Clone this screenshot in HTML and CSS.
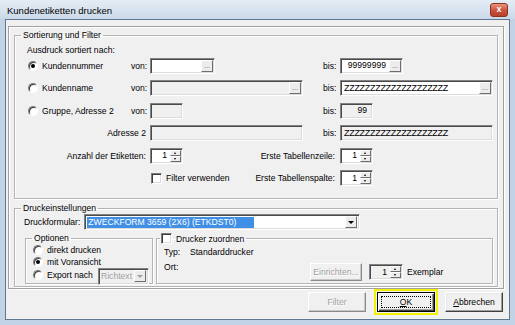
FILE: index.html
```html
<!DOCTYPE html>
<html lang="de">
<head>
  <meta charset="UTF-8" />
  <title>Kundenetiketten drucken</title>
  <link rel="stylesheet" href="styles.css">
</head>
<body>
  <div class="window">
    <div class="titlebar">
      <span class="title">Kundenetiketten drucken</span>
      <span class="close">x</span>
    </div>

    <div class="client">
      <div class="panel">

        <fieldset class="group sort">
          <legend>Sortierung und Filter</legend>
          <div class="caption">Ausdruck sortiert nach:</div>
          <div class="sort-grid">
            <!-- Kundennummer -->
            <span class="opt"><span class="radio on"></span>Kundennummer</span>
            <span class="lbl">von:</span>
            <span class="field w65"><span class="val"></span><span class="dots">...</span></span>
            <span class="lbl bis">bis:</span>
            <span class="field w63"><span class="val right">99999999</span><span class="dots">...</span></span>

            <!-- Kundenname -->
            <span class="opt"><span class="radio"></span>Kundenname</span>
            <span class="lbl">von:</span>
            <span class="field off"><span class="val"></span><span class="dots">...</span></span>
            <span class="lbl bis">bis:</span>
            <span class="field"><span class="val zz">ZZZZZZZZZZZZZZZZZZZZ</span><span class="dots">...</span></span>

            <!-- Gruppe -->
            <span class="opt"><span class="radio"></span>Gruppe, Adresse 2</span>
            <span class="lbl">von:</span>
            <span class="field off w33"><span class="val"></span></span>
            <span class="lbl bis">bis:</span>
            <span class="field off w33"><span class="val right">99</span></span>

            <!-- Adresse 2 -->
            <span class="rlbl wide">Adresse 2</span>
            <span class="field off"><span class="val"></span></span>
            <span class="lbl bis">bis:</span>
            <span class="field off"><span class="val zz">ZZZZZZZZZZZZZZZZZZZZ</span></span>

            <!-- Anzahl / Tabellenzeile -->
            <span class="rlbl wide r5">Anzahl der Etiketten:</span>
            <span class="field w33 c3 r5"><span class="val right">1</span><span class="spin"><i class="up"></i><i class="dn"></i></span></span>
            <span class="rlbl right-side r5">Erste Tabellenzeile:</span>
            <span class="field w33 c6 r5"><span class="val right">1</span><span class="spin"><i class="up"></i><i class="dn"></i></span></span>

            <!-- Filter / Tabellenspalte -->
            <span class="check-line c3 r6"><span class="check"></span>Filter verwenden</span>
            <span class="rlbl right-side r6">Erste Tabellenspalte:</span>
            <span class="field w33 c6 r6"><span class="val right">1</span><span class="spin"><i class="up"></i><i class="dn"></i></span></span>
          </div>
        </fieldset>

        <fieldset class="group druck">
          <legend>Druckeinstellungen</legend>
          <div class="form-row">
            <span>Druckformular:</span>
            <span class="select">
              <span class="val"><span class="sel">ZWECKFORM 3659 (2X6) (ETKDST0)</span></span>
              <span class="arrow"></span>
            </span>
          </div>
          <div class="sub-groups">
            <fieldset class="group small optionen">
              <legend>Optionen</legend>
              <div class="opt-row"><span class="radio"></span>direkt drucken</div>
              <div class="opt-row"><span class="radio on"></span>mit Voransicht</div>
              <div class="opt-row"><span class="radio"></span>Export nach
                <span class="select off richtext"><span class="val">Richtext</span><span class="arrow"></span></span>
              </div>
            </fieldset>
            <fieldset class="group small drucker">
              <legend><span class="check"></span>Drucker zuordnen</legend>
              <div class="info-row"><span class="key">Typ:</span>Standarddrucker</div>
              <div class="info-row ort">
                <span class="key">Ort:</span>
                <span class="btn off einrichten">Einrichten...</span>
                <span class="field off w34"><span class="val right">1</span><span class="spin"><i class="up"></i><i class="dn"></i></span></span>
                <span class="exemplar">Exemplar</span>
              </div>
            </fieldset>
          </div>
        </fieldset>

      </div>

      <div class="buttons">
        <span class="btn off">Filter</span>
        <span class="focus-mark"><span class="btn default"><span class="focus"><u>O</u>K</span></span></span>
        <span class="btn"><u>A</u>bbrechen</span>
      </div>
    </div>
  </div>
</body>
</html>
```

FILE: styles.css
```css
* {
  box-sizing: border-box;
}
body {
  margin: 0;
  font-family: "Liberation Sans", Arial, sans-serif;
  font-size: 8.6px;
  color: #000;
}
.window {
  width: 515px;
  height: 325px;
  background: #c2d3e6;
  padding: 0 5px 5px;
  display: flex;
  flex-direction: column;
}
.titlebar {
  height: 19px;
  flex: none;
  margin: 0 -5px;
  padding: 0 7px;
  display: flex;
  align-items: center;
  background: linear-gradient(#e4ecf5, #d6e2ef 60%, #cad8e8);
}
.title {
  font-size: 9.5px;
  padding-top: 1px;
}
.close {
  margin-left: auto;
  width: 18px;
  height: 14px;
  border: 1px solid #8a3422;
  border-radius: 3px;
  background: linear-gradient(#e9957c, #c9503a 55%, #b9402b);
  color: #fff;
  font-weight: bold;
  font-size: 9px;
  line-height: 11px;
  text-align: center;
}

.client {
  flex: 1;
  min-height: 0;
  border: 1px solid #5f7790;
  background: #f0f0f0;
  display: flex;
  flex-direction: column;
  padding: 6px 5px 0 2px;
}
.panel {
  height: 263px;
  flex: none;
  border: 1px solid #a0a0a0;
  box-shadow: inset 1px 1px 0 #fff, 1px 1px 0 #fff;
  padding: 0 5px;
}

/* group boxes */
.group {
  margin: 0;
  border: 1px solid #b4b4b4;
  box-shadow: inset 1px 1px 0 #fff, 1px 1px 0 #fff;
  min-width: 0;
}
.group legend {
  line-height: 11px;
  padding: 0 2px;
}
.sort {
  margin-top: 3px;
  padding: 4px 3px 12px 13px;
}
.sort legend {
  margin-left: -7px;
}
.caption {
  line-height: 11px;
  margin-left: -1px;
}
.sort-grid {
  margin-top: 1.5px;
  display: grid;
  grid-template-columns: 102px 20px 153px 19px 18px 153px;
  grid-auto-rows: 16px;
  row-gap: 6.6px;
  align-items: center;
}
.opt {
  display: flex;
  align-items: center;
  gap: 4px;
}
.lbl {
  padding-left: 1px;
}
.lbl.bis {
  grid-column: 5;
}
.rlbl {
  text-align: right;
  padding-right: 4px;
  white-space: nowrap;
}
.rlbl.wide {
  grid-column: 1 / 3;
}
.rlbl.right-side {
  grid-column: 3 / 6;
  padding-right: 5px;
}
.c3 { grid-column: 3; }
.c6 { grid-column: 6; }
.r5 { grid-row: 5; }
.r6 { grid-row: 6; }
.check-line {
  display: flex;
  align-items: center;
  gap: 4px;
  padding-left: 1px;
}

/* sunken inputs */
.field {
  height: 16px;
  display: flex;
  align-items: center;
  border: 1px solid;
  border-color: #828282 #fff #fff #828282;
  box-shadow: inset 1px 1px 0 #4a4a4a, inset -1px -1px 0 #dcdcdc;
  background: #fff;
  padding: 2px 2px 2px 3px;
}
.field.off {
  background: #f0f0f0;
}
.w65 { width: 65px; }
.w63 { width: 63px; }
.w33 { width: 33px; }
.w34 { width: 34px; }
.val {
  flex: 1;
  white-space: nowrap;
  overflow: hidden;
  line-height: 11px;
}
.val.right {
  text-align: right;
  padding-right: 3px;
}
.val.zz {
  font-size: 9px;
  letter-spacing: -0.3px;
}
.dots {
  width: 12px;
  height: 12px;
  margin-right: -1px;
  border: 1px solid;
  border-color: #fff #6e6e6e #6e6e6e #fff;
  background: #ececec;
  color: #555;
  font-size: 7px;
  line-height: 9px;
  text-align: center;
}
.spin {
  width: 11px;
  height: 12px;
  margin-right: -1px;
  display: flex;
  flex-direction: column;
}
.spin i {
  flex: 1;
  position: relative;
  border: 1px solid;
  border-color: #fff #6e6e6e #6e6e6e #fff;
  background: #ececec;
}
.spin i::after {
  content: "";
  position: absolute;
  left: 3px;
  top: 1px;
  border-left: 1.5px solid transparent;
  border-right: 1.5px solid transparent;
}
.spin .up::after {
  border-bottom: 2px solid #000;
}
.spin .dn::after {
  border-top: 2px solid #000;
}

/* radio / check */
.radio {
  width: 10px;
  height: 10px;
  flex: none;
  border-radius: 50%;
  border: 1px solid;
  border-color: #7a7a7a #fff #fff #7a7a7a;
  box-shadow: inset 1px 1px 0 #3c3c3c;
  background: #fff;
  position: relative;
}
.radio.on::after {
  content: "";
  position: absolute;
  left: 2px;
  top: 2px;
  width: 4px;
  height: 4px;
  border-radius: 50%;
  background: #000;
}
.check {
  width: 11px;
  height: 11px;
  flex: none;
  border: 1px solid;
  border-color: #7a7a7a #fff #fff #7a7a7a;
  box-shadow: inset 1px 1px 0 #3c3c3c, inset -1px -1px 0 #dcdcdc;
  background: #fff;
}

/* Druckeinstellungen */
.druck {
  margin-top: 4px;
  padding: 0 3px 2px 9px;
}
.druck > legend {
  margin-left: -3px;
}
.form-row {
  display: flex;
  align-items: center;
  gap: 4px;
  height: 16px;
}
.select {
  width: 276px;
  height: 16px;
  display: flex;
  align-items: center;
  border: 1px solid;
  border-color: #828282 #fff #fff #828282;
  box-shadow: inset 1px 1px 0 #4a4a4a, inset -1px -1px 0 #dcdcdc;
  background: #fff;
  padding: 2px;
}
.sel {
  display: inline-block;
  width: 167px;
  background: #3f8fe6;
  color: #fff;
  padding-left: 1px;
}
.arrow {
  width: 12px;
  height: 12px;
  flex: none;
  margin-left: auto;
  border: 1px solid;
  border-color: #fff #6e6e6e #6e6e6e #fff;
  background: #ececec;
  position: relative;
}
.arrow::after {
  content: "";
  position: absolute;
  left: 2px;
  top: 4px;
  border-left: 3px solid transparent;
  border-right: 3px solid transparent;
  border-top: 3px solid #000;
}
.sub-groups {
  margin-top: 3px;
  margin-left: 1px;
  display: flex;
  gap: 3px;
}
.group.small {
  height: 51px;
  padding: 0 3px 0 7px;
}
.group.small legend {
  line-height: 10px;
}
.optionen {
  width: 128px;
}
.optionen legend {
  margin-left: -1px;
}
.opt-row {
  height: 12.5px;
  display: flex;
  align-items: center;
  gap: 4px;
}
.select.richtext {
  width: 51px;
  height: 17px;
  margin-left: auto;
  margin-top: 3px;
  background: #f0f0f0;
  color: #a0a0a0;
}
.select.off .arrow::after {
  border-top-color: #a0a0a0;
}
.drucker {
  width: 337px;
  padding-left: 5px;
}
.drucker legend {
  display: flex;
  align-items: center;
  gap: 4px;
  margin-left: -4px;
  padding-left: 1px;
}
.info-row {
  display: flex;
  line-height: 11px;
  margin-top: 3px;
}
.key {
  width: 26px;
}
.info-row.ort {
  margin-top: 4px;
  align-items: flex-start;
}
.ort .key {
  width: 146px;
}
.btn.einrichten {
  width: 52px;
  height: 18px;
  margin-top: 1px;
}
.ort .field {
  margin-top: 2px;
  margin-left: 7px;
}
.exemplar {
  margin-left: 4px;
  margin-top: 5px;
}

/* buttons */
.btn {
  display: flex;
  align-items: center;
  justify-content: center;
  width: 58px;
  height: 20px;
  border: 1px solid;
  border-color: #fff #404040 #404040 #fff;
  box-shadow: inset -1px -1px 0 #a0a0a0, inset 1px 1px 0 #e8e8e8;
  background: #f0f0f0;
}
.btn.off {
  color: #a0a0a0;
  text-shadow: 1px 1px 0 #fff;
  border-color: #fff #8a8a8a #8a8a8a #fff;
  box-shadow: inset -1px -1px 0 #c8c8c8;
}
.buttons {
  display: flex;
  align-items: center;
  height: 26px;
  padding-left: 300px;
}
.focus-mark {
  margin-left: 8px;
  margin-right: 7px;
  border: 2px solid #f2f200;
  padding: 1px;
}
.btn.default {
  border-color: #000;
  box-shadow: inset 1px 1px 0 #fff, inset -1px -1px 0 #404040, inset -2px -2px 0 #a0a0a0;
  padding: 3px;
}
.focus {
  flex: 1;
  align-self: stretch;
  display: flex;
  align-items: center;
  justify-content: center;
  border: 1px dotted #000;
}
```
